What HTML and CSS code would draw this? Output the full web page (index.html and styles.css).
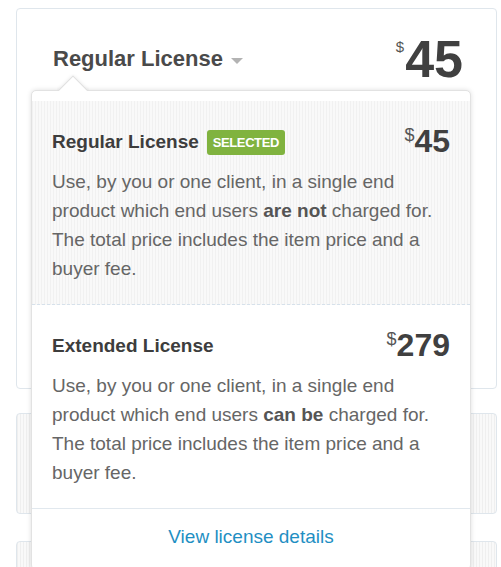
FILE: index.html
```html
<!DOCTYPE html>
<html lang="en">
<head>
<meta charset="utf-8">
<title>License selector</title>
<link rel="stylesheet" href="styles.css">
</head>
<body>
<div class="page">
  <section class="card card-main">
    <div class="license-head">
      <div class="license-toggle">
        <span class="license-name">Regular License</span>
        <span class="caret"></span>
      </div>
      <div class="price price-lg"><span class="cur">$</span><span class="amt">45</span></div>
    </div>

    <div class="popover">
      <span class="popover-arrow"></span>
      <div class="option option-selected">
        <div class="option-head">
          <div class="option-title">Regular License <span class="badge">SELECTED</span></div>
          <div class="price price-sm"><span class="cur">$</span><span class="amt">45</span></div>
        </div>
        <p class="option-desc">Use, by you or one client, in a single end product which end users <strong>are not</strong> charged for. The total price includes the item price and a buyer fee.</p>
      </div>
      <div class="option">
        <div class="option-head">
          <div class="option-title">Extended License</div>
          <div class="price price-sm"><span class="cur">$</span><span class="amt">279</span></div>
        </div>
        <p class="option-desc">Use, by you or one client, in a single end product which end users <strong>can be</strong> charged for. The total price includes the item price and a buyer fee.</p>
      </div>
      <div class="popover-foot">
        <a class="details-link" href="#">View license details</a>
      </div>
    </div>
  </section>
  <section class="card card-striped card-second"></section>
  <section class="card card-striped card-third"></section>
</div>
</body>
</html>
```
FILE: styles.css
```css
html, body {
  margin: 0;
  padding: 0;
  overflow: hidden;
  background: #ffffff;
}

body {
  font-family: "Liberation Sans", Arial, sans-serif;
  color: #454545;
}

.page {
  padding: 8px 4px 0 16px;
  display: flex;
  flex-direction: column;
}

.card {
  box-sizing: border-box;
  border: 1px solid #dfe6ec;
  border-radius: 4px;
  background: #ffffff;
}

.card-main {
  position: relative;
  height: 381px;
  padding: 24px 33px 0 36px;
}

.card-striped {
  background: repeating-linear-gradient(90deg, #efefef 0, #efefef 1px, #f9f9f9 1px, #f9f9f9 3px);
}

.card-second {
  margin-top: 24px;
  height: 101px;
}

.card-third {
  margin-top: 27px;
  height: 80px;
}

.license-head {
  display: flex;
  justify-content: space-between;
  align-items: center;
}

.license-toggle {
  display: flex;
  align-items: center;
  gap: 8px;
}

.license-name {
  font-size: 22px;
  line-height: 1;
  font-weight: bold;
  color: #4a4a4a;
}

.caret {
  width: 0;
  height: 0;
  border-left: 6px solid transparent;
  border-right: 6px solid transparent;
  border-top: 6px solid #b3b3b3;
  margin-top: 3px;
}

.price {
  display: flex;
  align-items: flex-start;
  color: #404040;
}

.price .amt {
  font-weight: bold;
  line-height: 1;
}

.price .cur {
  font-weight: normal;
  line-height: 1;
  color: #555555;
}

.price-lg .amt {
  font-size: 52px;
}

.price-lg .cur {
  font-size: 15px;
  margin-top: 6px;
  margin-right: 1px;
}

.price-sm .amt {
  font-size: 32px;
}

.price-sm .cur {
  font-size: 18px;
  margin-top: 1px;
}

.popover {
  position: absolute;
  top: 81px;
  left: 14px;
  width: 440px;
  box-sizing: border-box;
  padding-top: 10px;
  background: #ffffff;
  border: 1px solid #e2e2e2;
  border-radius: 5px;
  box-shadow: 0 0 5px rgba(0, 0, 0, 0.13);
}

.popover-arrow {
  position: absolute;
  top: -17px;
  left: 25px;
  width: 32px;
  height: 17px;
  overflow: hidden;
}

.popover-arrow::after {
  content: "";
  position: absolute;
  left: 5px;
  top: 6px;
  width: 22px;
  height: 22px;
  box-sizing: border-box;
  background: #ffffff;
  border: 1px solid #dedede;
  transform: rotate(45deg);
  box-shadow: 0 0 4px rgba(0, 0, 0, 0.1);
}

.option {
  padding: 24px 20px 21px 20px;
}

.option-selected {
  background: repeating-linear-gradient(90deg, #f1f1f1 0, #f1f1f1 1px, #f9f9f9 1px, #f9f9f9 3px);
  border-bottom: 1px dashed #d6e1eb;
}

.option-head {
  display: flex;
  justify-content: space-between;
  align-items: center;
}

.option-title {
  display: flex;
  align-items: center;
  gap: 8px;
  font-size: 19px;
  line-height: 1;
  font-weight: bold;
  color: #3d3d3d;
}

.badge {
  display: inline-block;
  background: #80b33f;
  color: #ffffff;
  font-size: 13px;
  letter-spacing: -0.4px;
  font-weight: bold;
  line-height: 25px;
  height: 25px;
  padding: 0 6px;
  border-radius: 3px;
  margin-top: 3px;
}

.option-desc {
  margin: 10px 0 0;
  font-size: 19px;
  line-height: 29px;
  color: #666666;
}

.option-desc strong {
  color: #555555;
}

.popover-foot {
  border-top: 1px solid #e1e8ee;
  padding: 16px 0 20px;
  text-align: center;
}

.details-link {
  font-size: 19px;
  line-height: 24px;
  color: #1f8fc3;
  text-decoration: none;
}
```
